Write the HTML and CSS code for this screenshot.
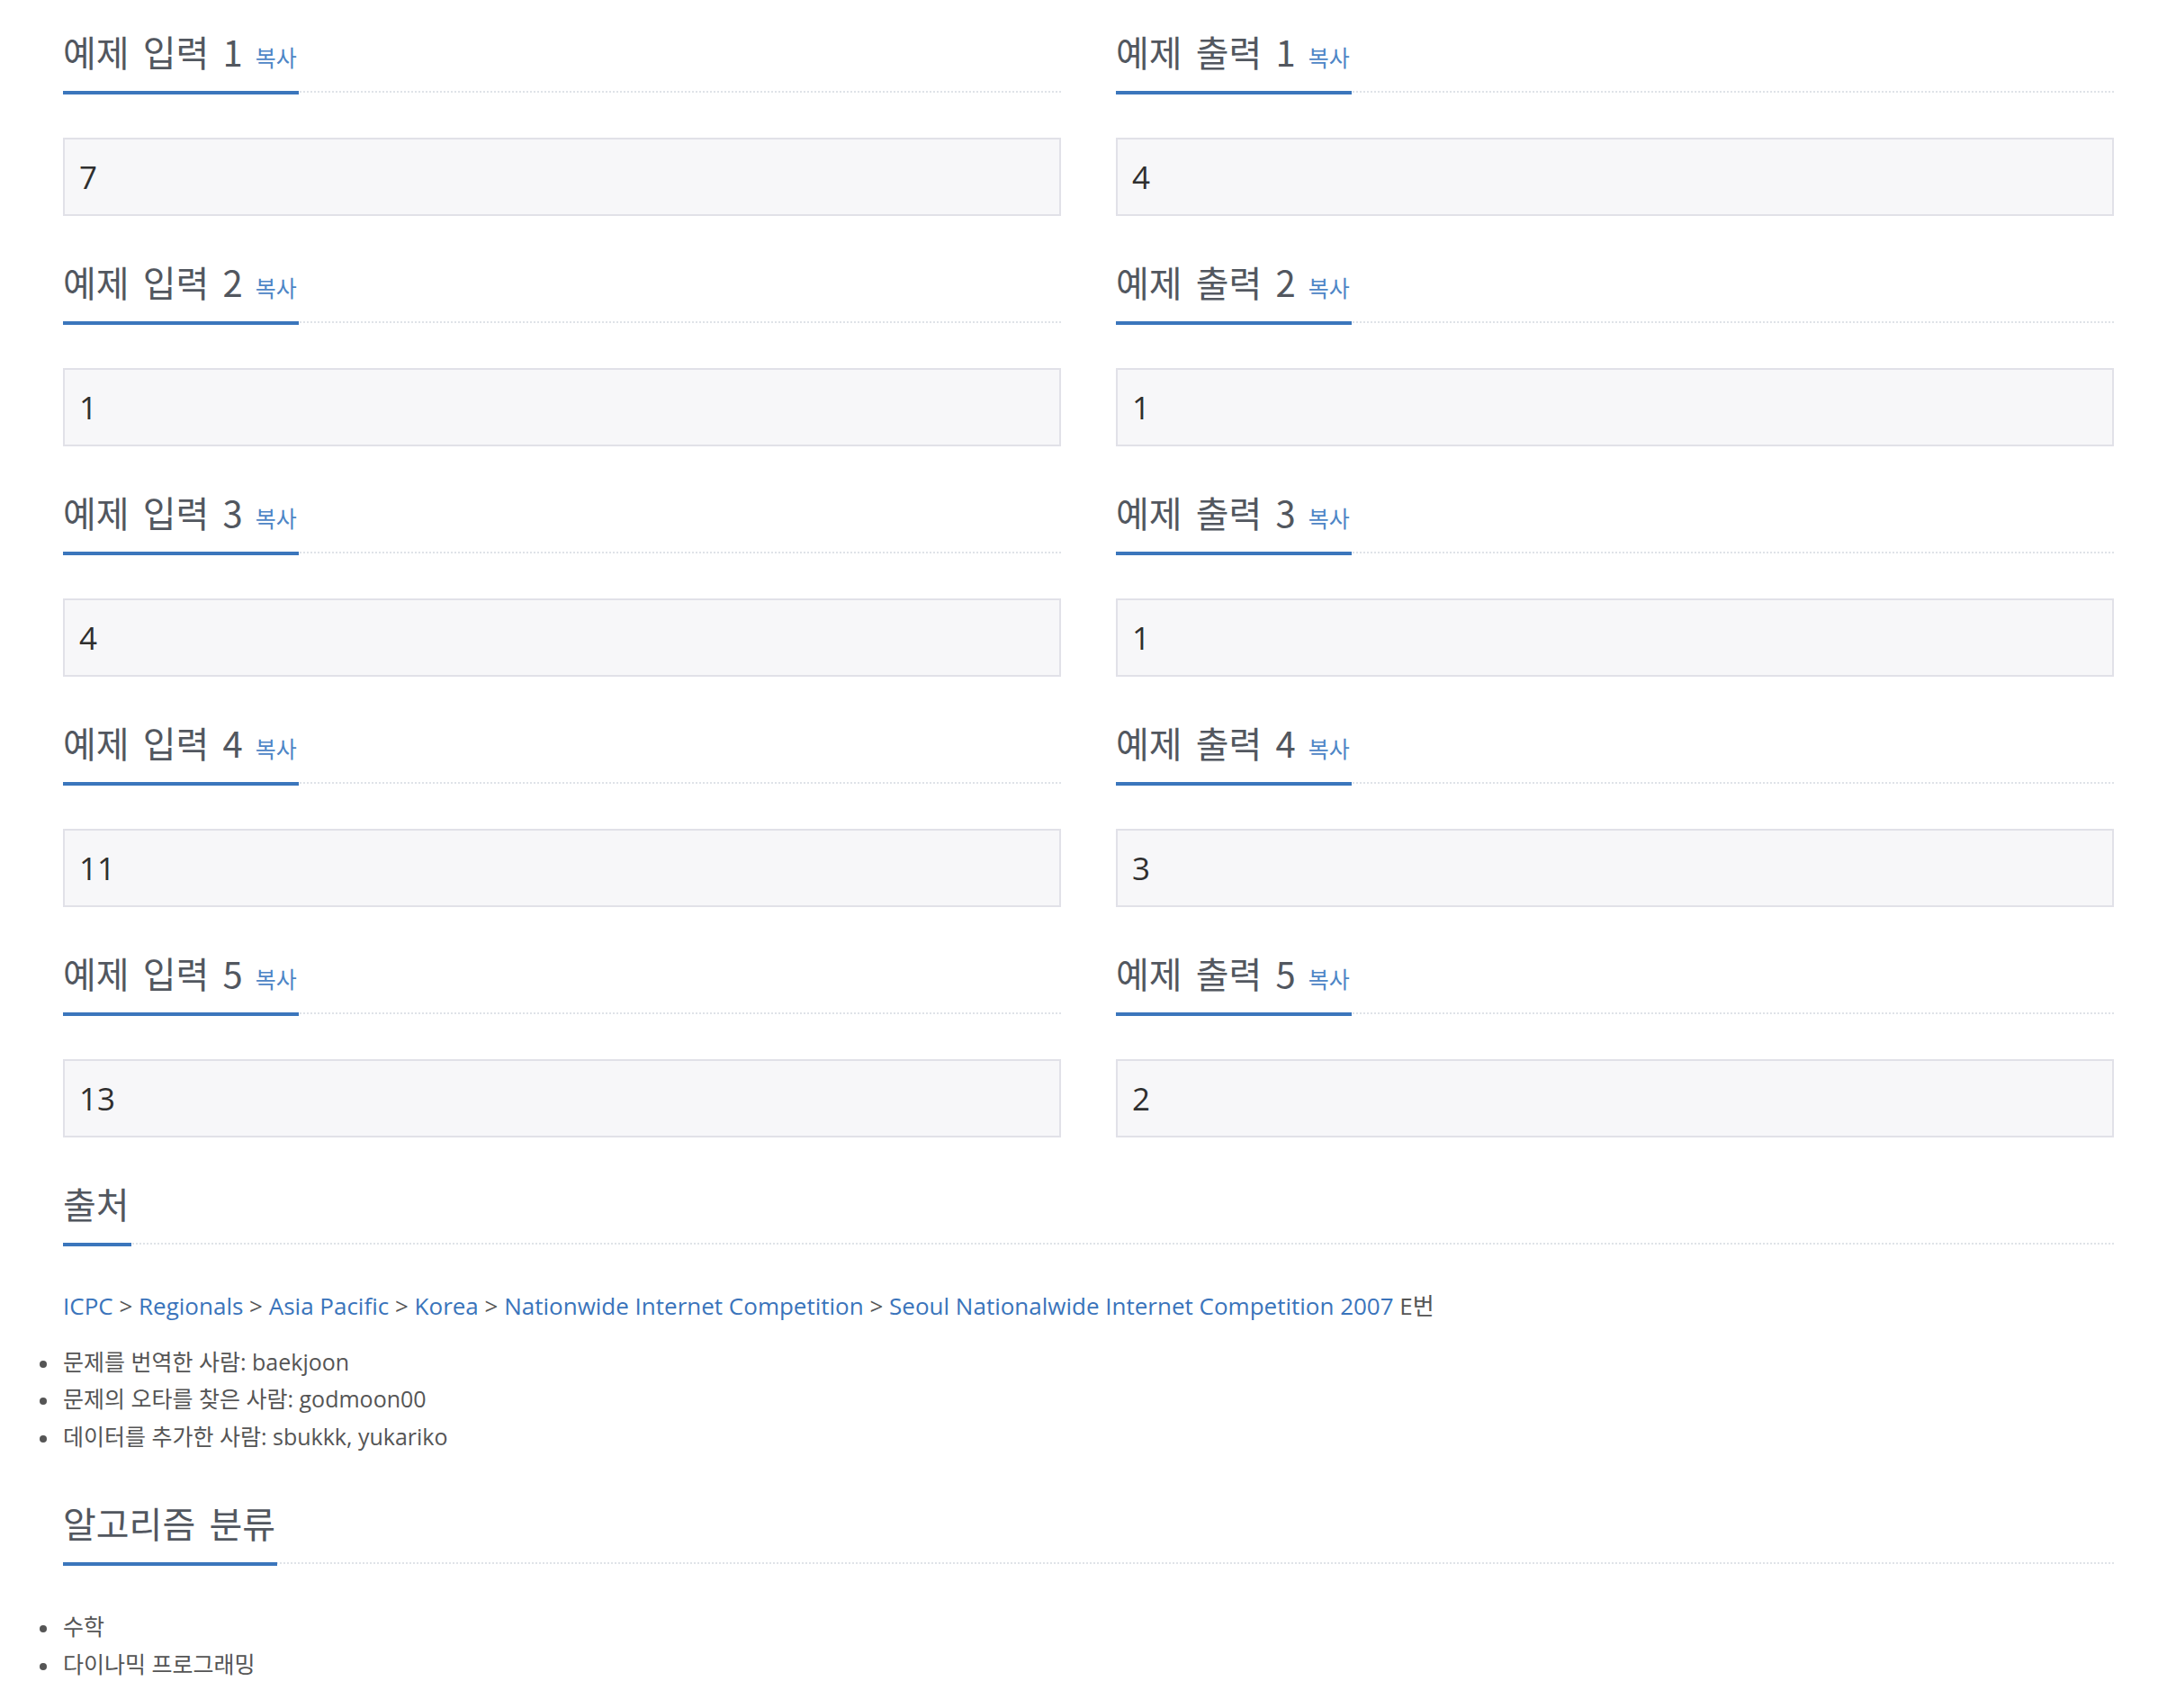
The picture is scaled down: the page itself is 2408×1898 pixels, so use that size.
FILE: index.html
```html
<!DOCTYPE html>
<html lang="ko">
<head>
<meta charset="utf-8">
<title>예제</title>
<link rel="stylesheet" href="styles.css">
</head>
<body>
<div class="page">
  <div class="samples">
    <section class="sample">
      <div class="headline"><h2>예제 입력 1<a class="copy" href="#">복사</a></h2></div>
      <pre class="data">7</pre>
    </section>
    <section class="sample">
      <div class="headline"><h2>예제 출력 1<a class="copy" href="#">복사</a></h2></div>
      <pre class="data">4</pre>
    </section>
    <section class="sample">
      <div class="headline"><h2>예제 입력 2<a class="copy" href="#">복사</a></h2></div>
      <pre class="data">1</pre>
    </section>
    <section class="sample">
      <div class="headline"><h2>예제 출력 2<a class="copy" href="#">복사</a></h2></div>
      <pre class="data">1</pre>
    </section>
    <section class="sample">
      <div class="headline"><h2>예제 입력 3<a class="copy" href="#">복사</a></h2></div>
      <pre class="data">4</pre>
    </section>
    <section class="sample">
      <div class="headline"><h2>예제 출력 3<a class="copy" href="#">복사</a></h2></div>
      <pre class="data">1</pre>
    </section>
    <section class="sample">
      <div class="headline"><h2>예제 입력 4<a class="copy" href="#">복사</a></h2></div>
      <pre class="data">11</pre>
    </section>
    <section class="sample">
      <div class="headline"><h2>예제 출력 4<a class="copy" href="#">복사</a></h2></div>
      <pre class="data">3</pre>
    </section>
    <section class="sample">
      <div class="headline"><h2>예제 입력 5<a class="copy" href="#">복사</a></h2></div>
      <pre class="data">13</pre>
    </section>
    <section class="sample">
      <div class="headline"><h2>예제 출력 5<a class="copy" href="#">복사</a></h2></div>
      <pre class="data">2</pre>
    </section>
  </div>

  <section class="source">
    <div class="headline"><h2>출처</h2></div>
    <p class="crumbs"><a href="#">ICPC</a> &gt; <a href="#">Regionals</a> &gt; <a href="#">Asia Pacific</a> &gt; <a href="#">Korea</a> &gt; <a href="#">Nationwide Internet Competition</a> &gt; <a href="#">Seoul Nationalwide Internet Competition 2007</a> E번</p>
    <ul class="list">
      <li>문제를 번역한 사람: baekjoon</li>
      <li>문제의 오타를 찾은 사람: godmoon00</li>
      <li>데이터를 추가한 사람: sbukkk, yukariko</li>
    </ul>
  </section>

  <section class="tags">
    <div class="headline"><h2>알고리즘 분류</h2></div>
    <ul class="list">
      <li>수학</li>
      <li>다이나믹 프로그래밍</li>
    </ul>
  </section>
</div>
</body>
</html>
```

FILE: styles.css
```css
html, body {
  margin: 0;
  padding: 0;
  background: #ffffff;
}

body {
  font-family: "Open Sans", "Noto Sans CJK KR", sans-serif;
  color: #555555;
}

.page {
  padding: 32px 59px 40px 70px;
}

.samples {
  display: grid;
  grid-template-columns: 1fr 1fr;
  column-gap: 61px;
  row-gap: 48px;
}

.headline {
  display: flex;
  align-items: flex-end;
  border-bottom: 2px dotted #dfe3e8;
  margin-bottom: 50px;
}

.headline h2 {
  margin: 0 0 -4px 0;
  padding: 0 2px 19px 0;
  border-bottom: 4px solid #3b76bc;
  font-family: "Noto Sans CJK KR", sans-serif;
  font-weight: 400;
  font-size: 40px;
  line-height: 50px;
  word-spacing: 4px;
  color: #52575f;
  white-space: nowrap;
}

.copy {
  margin-left: 14px;
  font-size: 25px;
  line-height: 25px;
  word-spacing: 0;
  color: #4d85c6;
  text-decoration: none;
}

.data {
  margin: 0;
  padding: 20px 16px;
  border: 2px solid #e1e1e8;
  background: #f7f7f9;
  font-family: "Open Sans", sans-serif;
  font-size: 35px;
  line-height: 43px;
  color: #2f2f2f;
}

.source {
  margin-top: 48px;
}

.source .headline {
  margin-bottom: 48px;
}

.crumbs {
  margin: 0 0 20px 0;
  font-size: 26px;
  line-height: 41.5px;
  color: #555555;
}

.crumbs a {
  color: #3a74bb;
  text-decoration: none;
}

.list {
  margin: 0;
  padding: 0;
  list-style: none;
  font-size: 25px;
  line-height: 41.5px;
  color: #555555;
}

.list li::before {
  content: "";
  display: inline-block;
  width: 8px;
  height: 8px;
  border-radius: 50%;
  background: #555555;
  margin-left: -26px;
  margin-right: 18px;
  vertical-align: middle;
}

.tags {
  margin-top: 50px;
}

.tags .headline {
  margin-bottom: 49px;
}
```
